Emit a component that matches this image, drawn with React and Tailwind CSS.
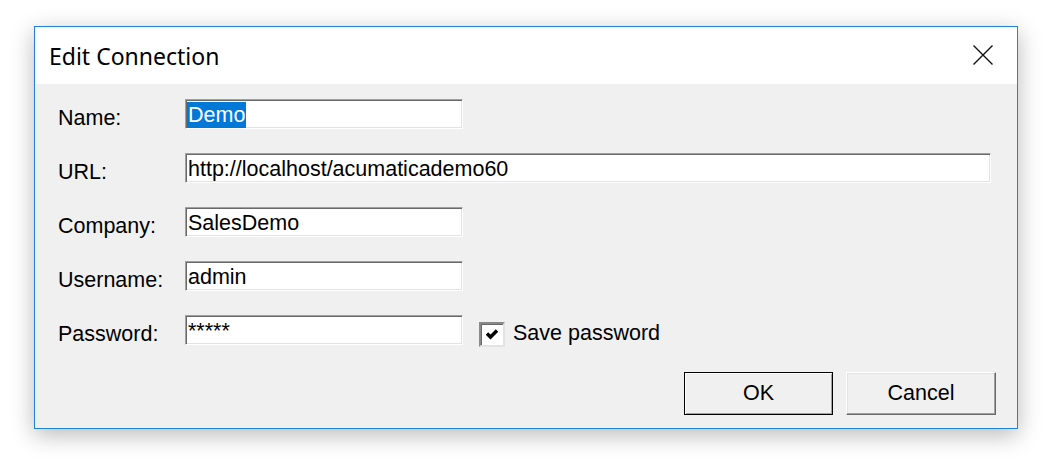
import React from 'react';

const sunken =
  'border border-t-[#a0a0a0] border-l-[#a0a0a0] border-r-white border-b-white shadow-[inset_1px_1px_0_#696969,inset_-1px_-1px_0_#e3e3e3] bg-white';

function Field({ label, value, width, selected = false, children }) {
  return (
    <div className="flex items-center h-[30px]">
      <span className="w-[127px] mt-[10px] text-[21.5px] leading-none text-black">{label}</span>
      <div className={`${sunken} h-[30px] flex items-center pl-[1px] pt-[1px]`} style={{ width }}>
        <span
          className={`text-[21.5px] leading-[26px] px-[1px] ${selected ? 'bg-[#0078d7] text-white' : 'text-black'}`}
        >
          {value}
        </span>
      </div>
      {children}
    </div>
  );
}

export default function App() {
  return (
    <div
      className="w-[1052px] h-[472px] bg-white pt-[26px] pl-[34px]"
      style={{ fontFamily: '"Liberation Sans", Arial, sans-serif' }}
    >
      <div className="w-[984px] h-[403px] border border-[#1e84d8] flex flex-col shadow-[0_6px_22px_rgba(0,0,0,0.28)]">
        <div className="h-[57px] bg-white flex items-center justify-between pl-[14px] pr-[24px]">
          <span
            className="text-[23px] text-black leading-none mt-[2px]"
            style={{ fontFamily: '"Noto Sans", "Open Sans", sans-serif' }}
          >
            Edit Connection
          </span>
          <svg width="20" height="20" viewBox="0 0 20 20" className="-mt-[2px]">
            <path d="M0.5 0.5 L19.5 19.5 M19.5 0.5 L0.5 19.5" stroke="#111" strokeWidth="1.4" />
          </svg>
        </div>
        <div className="flex-1 bg-[#f0f0f0] flex flex-col pt-[15px] pl-[23px] pr-[25px]">
          <div className="flex flex-col gap-[24px]">
            <Field label="Name:" value="Demo" width={278} selected />
            <Field label="URL:" value="http://localhost/acumaticademo60" width={806} />
            <Field label="Company:" value="SalesDemo" width={278} />
            <Field label="Username:" value="admin" width={278} />
            <Field label="Password:" value="*****" width={278}>
              <div className="flex items-center mt-[8px] ml-[16px]">
                <div
                  className="w-[26px] h-[25px] flex items-center justify-center bg-white border-2 border-t-[#8a8a8a] border-l-[#8a8a8a] border-r-[#e3e3e3] border-b-[#e3e3e3] shadow-[inset_1px_1px_0_#696969]"
                >
                  <svg width="12" height="11" viewBox="0 0 12 11">
                    <path
                      d="M1 4.5 L4.5 8 L11 1.5"
                      fill="none"
                      stroke="#000"
                      strokeWidth="3.4"
                      strokeLinejoin="miter"
                    />
                  </svg>
                </div>
                <span className="ml-[8px] text-[21.5px] leading-none text-black">Save password</span>
              </div>
            </Field>
          </div>
          <div className="flex justify-end gap-[13px] mt-[27px] mr-[-4px]">
            <button className="w-[149px] h-[43px] border border-black bg-[#f0f0f0] shadow-[inset_1px_1px_0_#fff,inset_-1px_-1px_0_#a0a0a0] text-[21.5px] text-black">
              OK
            </button>
            <button className="w-[150px] h-[43px] border border-t-white border-l-white border-r-[#696969] border-b-[#696969] bg-[#f0f0f0] shadow-[inset_-1px_-1px_0_#a0a0a0,inset_1px_1px_0_#e3e3e3] text-[21.5px] text-black">
              Cancel
            </button>
          </div>
        </div>
      </div>
    </div>
  );
}
